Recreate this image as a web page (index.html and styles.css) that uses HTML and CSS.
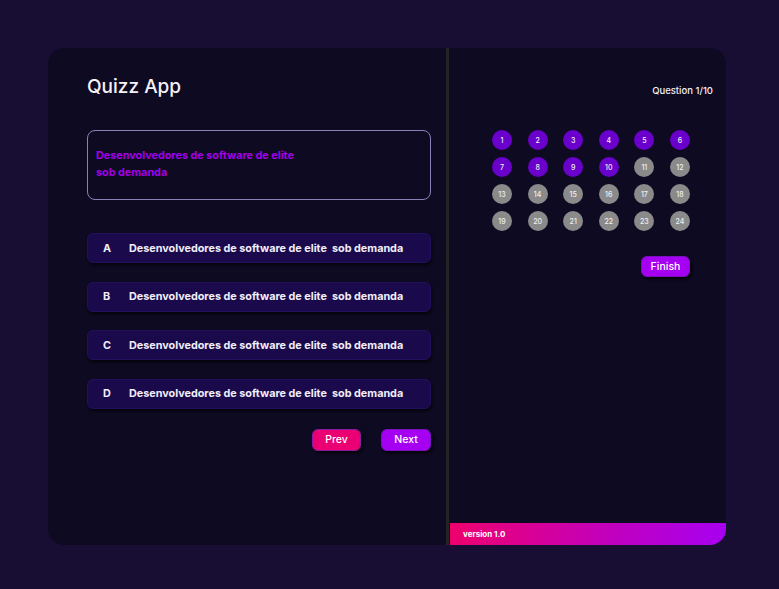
FILE: index.html
```html
<!DOCTYPE html>
<html>
<head>
<meta charset="utf-8">
<link rel="stylesheet" href="styles.css">
</head>
<body>
<div class="card">
  <section class="left">
    <h1 class="title">Quizz App</h1>
    <div class="question">Desenvolvedores de software de elite<br>sob demanda</div>
    <div class="options">
      <div class="option"><span class="letter">A</span><span>Desenvolvedores de software de elite&nbsp; sob demanda</span></div>
      <div class="option"><span class="letter">B</span><span>Desenvolvedores de software de elite&nbsp; sob demanda</span></div>
      <div class="option"><span class="letter">C</span><span>Desenvolvedores de software de elite&nbsp; sob demanda</span></div>
      <div class="option"><span class="letter">D</span><span>Desenvolvedores de software de elite&nbsp; sob demanda</span></div>
    </div>
    <div class="nav">
      <button class="btn prev">Prev</button>
      <button class="btn next">Next</button>
    </div>
  </section>
  <div class="divider"></div>
  <section class="right">
    <div class="counter">Question 1/10</div>
    <div class="grid">
      <span class="dot done">1</span><span class="dot done">2</span><span class="dot done">3</span><span class="dot done">4</span><span class="dot done">5</span><span class="dot done">6</span>
      <span class="dot done">7</span><span class="dot done">8</span><span class="dot done">9</span><span class="dot done">10</span><span class="dot">11</span><span class="dot">12</span>
      <span class="dot">13</span><span class="dot">14</span><span class="dot">15</span><span class="dot">16</span><span class="dot">17</span><span class="dot">18</span>
      <span class="dot">19</span><span class="dot">20</span><span class="dot">21</span><span class="dot">22</span><span class="dot">23</span><span class="dot">24</span>
    </div>
    <div class="finish-row"><button class="btn finish">Finish</button></div>
    <div class="spacer"></div>
    <footer class="footer">version 1.0</footer>
  </section>
</div>
</body>
</html>
```
FILE: styles.css
```css
html, body {
  margin: 0;
  padding: 0;
  background: #180e33;
  font-family: Inter, "Noto Sans", sans-serif;
  color: #fff;
}
body {
  padding: 48px 0 0 48px;
  height: 589px;
  box-sizing: border-box;
}
.card {
  width: 678px;
  height: 497px;
  background: #0e0a22;
  border-radius: 16px;
  display: flex;
  overflow: hidden;
}
.left {
  width: 398px;
  box-sizing: border-box;
  padding: 27px 15px 0 39px;
  display: flex;
  flex-direction: column;
}
.title {
  margin: 0;
  font-size: 19px;
  font-weight: 500;
  line-height: 24px;
  color: #f4f2f8;
}
.question {
  margin-top: 31px;
  height: 70px;
  box-sizing: border-box;
  border: 1.5px solid #8a82b6;
  border-radius: 8px;
  padding: 16px 8px 0 8px;
  color: #a200e6;
  font-size: 10.8px;
  font-weight: 700;
  line-height: 17px;
}
.options {
  margin-top: 33px;
  display: flex;
  flex-direction: column;
  gap: 18.5px;
}
.option {
  height: 30px;
  box-sizing: border-box;
  background: #1a0a4c;
  border: 1px solid #22105c;
  border-radius: 6px;
  box-shadow: 1px 2px 3px rgba(0,0,0,0.7);
  display: flex;
  align-items: center;
  padding-left: 15px;
  font-size: 10.8px;
  font-weight: 700;
  color: #f1eef8;
}
.letter {
  width: 26px;
}
.nav {
  margin-top: 20px;
  display: flex;
  justify-content: flex-end;
  gap: 20px;
}
.btn {
  border: none;
  border-radius: 6px;
  height: 22px;
  color: #fff;
  font-family: Inter, "Noto Sans", sans-serif;
  font-size: 10.5px;
  font-weight: 500;
  padding: 0;
  box-shadow: 2px 2px 3px rgba(0,0,0,0.8);
}
.prev {
  width: 49px;
  background: #ea0072;
  border: 1px solid #8a1a9e;
}
.next {
  width: 50px;
  background: #a600f2;
  border: 1px solid #7a10c0;
}
.divider {
  width: 3px;
  background: #242424;
}
.right {
  flex: 1;
  margin-left: 1px;
  display: flex;
  flex-direction: column;
}
.counter {
  margin-top: 37px;
  align-self: flex-end;
  margin-right: 13px;
  font-size: 9.5px;
  font-weight: 500;
  line-height: 12px;
  color: #f2f0f8;
}
.grid {
  margin-top: 33px;
  margin-left: 42px;
  display: grid;
  grid-template-columns: repeat(6, 20px);
  column-gap: 15.6px;
  row-gap: 7px;
}
.dot {
  width: 20px;
  height: 20px;
  border-radius: 50%;
  background: #8a8a8a;
  color: #f0f0f0;
  font-size: 7px;
  font-weight: 500;
  display: flex;
  align-items: center;
  justify-content: center;
}
.dot.done {
  background: #6a00cc;
}
.finish-row {
  margin-top: 25px;
  display: flex;
  justify-content: flex-end;
  padding-right: 36px;
}
.finish {
  width: 49px;
  height: 21px;
  background: #a600f2;
  border: 1px solid #7a10c0;
}
.spacer {
  flex: 1;
}
.footer {
  height: 22px;
  background: linear-gradient(100deg, #ef006c 0%, #c000c0 60%, #a600f2 100%);
  font-size: 8px;
  font-weight: 700;
  line-height: 22px;
  padding-left: 13px;
  color: #fff;
}
```
